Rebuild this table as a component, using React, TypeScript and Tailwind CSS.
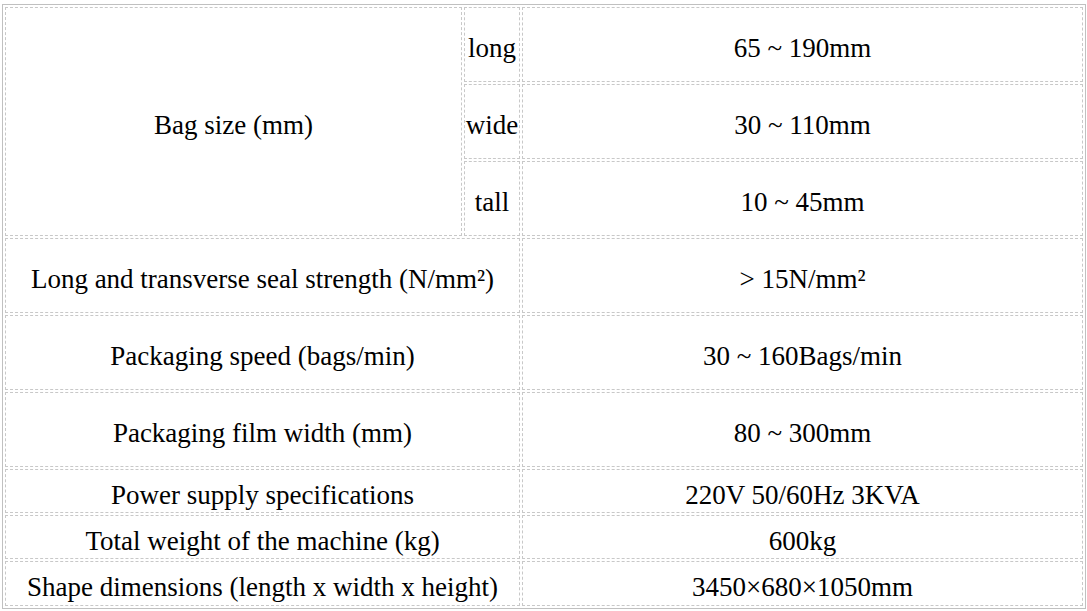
import React from "react";

const cell =
  "border border-dashed border-[#c8c8c8] text-center align-middle p-0 pt-[8px] font-['Liberation_Serif',serif]";

export default function App() {
  return (
    <div className="w-[1087px] h-[611px] bg-white text-black pt-[4px] pl-[2px] font-['Liberation_Serif',serif]">
      <table className="table-fixed border-separate border-spacing-[2px] border border-solid border-[#c0c0c0] w-[1082px] text-[27px] leading-none font-['Liberation_Serif',serif]">
        <colgroup>
          <col className="w-[457px]" />
          <col className="w-[56px]" />
          <col className="w-[561px]" />
        </colgroup>
        <tbody>
          <tr className="h-[75px]">
            <td rowSpan={3} className={cell}>
              Bag size (mm)
            </td>
            <td className={cell}>long</td>
            <td className={cell}>65 ~ 190mm</td>
          </tr>
          <tr className="h-[75px]">
            <td className={cell}>wide</td>
            <td className={cell}>30 ~ 110mm</td>
          </tr>
          <tr className="h-[75px]">
            <td className={cell}>tall</td>
            <td className={cell}>10 ~ 45mm</td>
          </tr>
          <tr className="h-[75px]">
            <td colSpan={2} className={cell}>
              Long and transverse seal strength (N/mm²)
            </td>
            <td className={cell}>&gt; 15N/mm²</td>
          </tr>
          <tr className="h-[75px]">
            <td colSpan={2} className={cell}>
              Packaging speed (bags/min)
            </td>
            <td className={cell}>30 ~ 160Bags/min</td>
          </tr>
          <tr className="h-[75px]">
            <td colSpan={2} className={cell}>
              Packaging film width (mm)
            </td>
            <td className={cell}>80 ~ 300mm</td>
          </tr>
          <tr className="h-[44px]">
            <td colSpan={2} className={cell}>
              Power supply specifications
            </td>
            <td className={cell}>220V 50/60Hz 3KVA</td>
          </tr>
          <tr className="h-[44px]">
            <td colSpan={2} className={cell}>
              Total weight of the machine (kg)
            </td>
            <td className={cell}>600kg</td>
          </tr>
          <tr className="h-[45px]">
            <td colSpan={2} className={cell}>
              Shape dimensions (length x width x height)
            </td>
            <td className={cell}>3450×680×1050mm</td>
          </tr>
        </tbody>
      </table>
    </div>
  );
}
